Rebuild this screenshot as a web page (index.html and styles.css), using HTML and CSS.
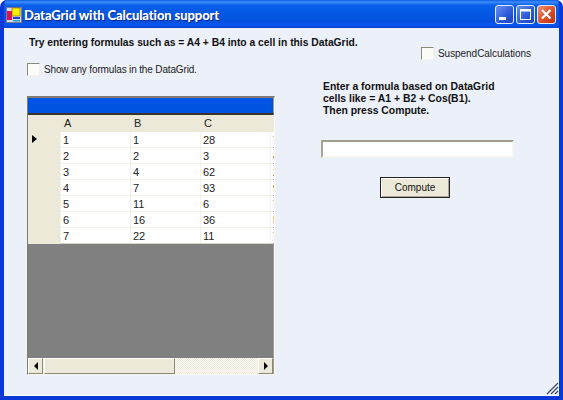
FILE: index.html
```html
<!DOCTYPE html>
<html lang="en">
<head>
<meta charset="utf-8">
<title>DataGrid with Calculation support</title>
<link rel="stylesheet" href="styles.css">
</head>
<body>
<div class="window">
  <header class="titlebar">
    <svg class="app-icon" width="16" height="16" viewBox="0 0 16 16">
      <rect x="0.5" y="0.5" width="15" height="15" fill="#d8d8e8" stroke="#7a7a90"/>
      <rect x="1" y="4" width="5" height="9" fill="#e0105a"/>
      <rect x="6" y="1" width="8" height="8" fill="#f8f000" stroke="#806000" stroke-width="0.6"/>
      <rect x="7" y="10" width="7" height="2" fill="#2040d0"/>
      <rect x="7" y="13" width="7" height="1.5" fill="#20a0c0"/>
    </svg>
    <span class="title">DataGrid with Calculation support</span>
    <div class="caption-buttons">
      <button class="cap cap-min" aria-label="Minimize"><svg width="19" height="19" viewBox="0 0 19 19"><rect x="4" y="12" width="7" height="3" fill="#fff"/></svg></button>
      <button class="cap cap-max" aria-label="Maximize"><svg width="19" height="19" viewBox="0 0 19 19"><rect x="4.5" y="4.5" width="10" height="10" fill="none" stroke="#fff"/><rect x="4" y="4" width="11" height="2.5" fill="#fff"/></svg></button>
      <button class="cap cap-close" aria-label="Close"><svg width="19" height="19" viewBox="0 0 19 19"><path d="M5 5l8.500 8.500M13.500 5L5 13.500" stroke="#fff" stroke-width="2.200" fill="none"/></svg></button>
    </div>
  </header>
  <main class="client">
    <section class="left">
      <p class="intro">Try entering formulas such as = A4 + B4 into a cell in this DataGrid.</p>
      <label class="check check-show"><span class="box"></span>Show any formulas in the DataGrid.</label>
      <div class="grid">
        <div class="grid-caption"></div>
        <div class="grid-view">
          <div class="row head"><div class="rh"></div><div class="c">A</div><div class="c cb">B</div><div class="c cc">C</div><div class="c cd"></div></div>
          <div class="row"><div class="rh"><span class="arrow"></span></div><div class="c">1</div><div class="c cb">1</div><div class="c cc">28</div><div class="c cd">7</div></div>
          <div class="row"><div class="rh"></div><div class="c">2</div><div class="c cb">2</div><div class="c cc">3</div><div class="c cd">4</div></div>
          <div class="row"><div class="rh"></div><div class="c">3</div><div class="c cb">4</div><div class="c cc">62</div><div class="c cd">2</div></div>
          <div class="row"><div class="rh"></div><div class="c">4</div><div class="c cb">7</div><div class="c cc">93</div><div class="c cd">9</div></div>
          <div class="row"><div class="rh"></div><div class="c">5</div><div class="c cb">11</div><div class="c cc">6</div><div class="c cd">7</div></div>
          <div class="row"><div class="rh"></div><div class="c">6</div><div class="c cb">16</div><div class="c cc">36</div><div class="c cd">5</div></div>
          <div class="row"><div class="rh"></div><div class="c">7</div><div class="c cb">22</div><div class="c cc">11</div><div class="c cd">7</div></div>
          <div class="grid-empty"></div>
          <div class="scrollbar">
            <div class="sb-btn"><span class="tri tri-left"></span></div>
            <div class="sb-thumb"></div>
            <div class="sb-track"></div>
            <div class="sb-btn"><span class="tri tri-right"></span></div>
          </div>
        </div>
      </div>
    </section>
    <section class="right">
      <label class="check check-suspend"><span class="box"></span>SuspendCalculations</label>
      <p class="hint">Enter a formula based on DataGrid<br>cells like = A1 + B2 + Cos(B1).<br>Then press Compute.</p>
      <input class="formula" type="text" aria-label="Formula">
      <button class="compute">Compute</button>
    </section>
    <svg class="grip" width="13" height="13" viewBox="0 0 13 13">
      <path d="M12 1L1 12M12 5L5 12M12 9L9 12" stroke="#3a4a70" stroke-width="1.300" fill="none"/>
      <path d="M12.500 2.500L2.500 12.500M12.500 6.500L6.500 12.500M12.500 10.500L10.500 12.500" stroke="#fff" stroke-width="0.800" fill="none"/>
    </svg>
  </main>
</div>
</body>
</html>
```
FILE: styles.css
```css
* { box-sizing: border-box; }
html, body { margin: 0; padding: 0; }
body {
  width: 563px;
  height: 400px;
  overflow: hidden;
  font-family: "Liberation Sans", Arial, sans-serif;
  font-size: 11px;
  color: #111;
  background: #fff;
}
.window {
  width: 563px;
  height: 400px;
  display: flex;
  flex-direction: column;
  border-radius: 7px 7px 0 0;
  overflow: hidden;
  background: #0a3fdc;
  border-left: 4px solid #0838d8;
  border-right: 4px solid #0838d8;
  border-bottom: 4px solid #0838d8;
}
.titlebar {
  flex: none;
  height: 28px;
  margin: 0 -4px;
  padding: 0 7px 0 6px;
  display: flex;
  align-items: center;
  gap: 2px;
  background: linear-gradient(#0a5ce0 0, #3c8cf8 2px, #0a60ea 5px, #0458e4 14px, #0550e0 22px, #0a58ee 25px, #0640d0 28px);
}
.app-icon { flex: none; margin-top: 1px; }
.title {
  font-family: "Lato", sans-serif;
  font-weight: 900;
  font-size: 13px;
  letter-spacing: -0.100px;
  color: #fff;
  text-shadow: 1px 1px 0 #0a2a90;
  margin-top: 1px;
}
.caption-buttons {
  margin-left: auto;
  display: flex;
  gap: 2px;
  margin-top: 1px;
}
.cap {
  width: 19px;
  height: 19px;
  padding: 0;
  border: 1px solid #e4ecff;
  border-radius: 3px;
  background: linear-gradient(135deg, #6a90f0, #2a58d8 60%, #1a40c0);
  display: flex;
}
.cap svg { margin: -1px; flex: none; }
.cap-close { background: linear-gradient(135deg, #f09070, #d84a20 60%, #b83010); }
.client {
  flex: 1;
  position: relative;
  display: flex;
  background: #ecf0f9;
  border-bottom: 1px solid #fff;
}
.left { width: 317px; flex: none; padding: 8px 0 0 23px; }
.intro {
  margin: 0 0 0 2px;
  height: 13px;
  line-height: 13px;
  font-size: 10.300px;
  font-weight: 700;
  white-space: nowrap;
}
.check {
  display: flex;
  align-items: center;
  gap: 4px;
  height: 13px;
  line-height: 13px;
  font-size: 10px;
  color: #222;
  white-space: nowrap;
}
.box {
  flex: none;
  width: 13px;
  height: 13px;
  background: #fbfbf7;
  border: 1px solid #8a8a78;
  border-right-color: #f4f3ea;
  border-bottom-color: #f4f3ea;
}
.check-show { margin-top: 14px; letter-spacing: -0.150px; }
.check-suspend { letter-spacing: -0.050px; }
.grid {
  margin-top: 20px;
  width: 248px;
  height: 279px;
  border: 1px solid #807c70;
  border-top-width: 2px;
  border-right-color: #f8f8f0;
  border-bottom-color: #f8f8f0;
  display: flex;
  flex-direction: column;
  background: #808080;
  overflow: hidden;
}
.grid-caption { flex: none; height: 15px; background: #0054e3; border-right: 1px solid #a09c90; }
.grid-view {
  flex: 1;
  display: flex;
  flex-direction: column;
  border-top: 2px solid #3a3428;
  border-right: 1px solid #a09c90;
  min-height: 0;
}
.row {
  flex: none;
  display: flex;
  height: 16px;
  background: #f4f2e8;
  gap: 1px;
}
.head { height: 17px; background: #ece9d8; }
.head .c { background: #ece9d8; padding-left: 3px; height: 17px; line-height: 17px; }
.rh {
  flex: none;
  width: 32px;
  background: #ece9d8;
  position: relative;
}
.c {
  flex: none;
  width: 69px;
  height: 15px;
  line-height: 16px;
  padding-left: 2px;
  background: #fff;
  overflow: hidden;
  color: #222;
  font-size: 11px;
}
.cd { width: 10px; }
.arrow {
  position: absolute;
  left: 4px;
  top: 3px;
  width: 0;
  height: 0;
  border-left: 5px solid #000;
  border-top: 4px solid transparent;
  border-bottom: 4px solid transparent;
}
.grid-empty { flex: 1; background: #808080; border-top: 1px solid #d8d5c4; margin-top: -1px; }
.scrollbar {
  flex: none;
  height: 16px;
  display: flex;
  background: repeating-conic-gradient(#fcfcf8 0 25%, #ece9d8 0 50%) 0 0 / 2px 2px;
}
.sb-btn {
  flex: none;
  width: 15px;
  background: #ece9d8;
  border: 1px solid;
  border-color: #fff #8a8678 #8a8678 #fff;
  display: flex;
  align-items: center;
  justify-content: center;
}
.sb-thumb {
  flex: none;
  width: 131px;
  margin-left: 1px;
  background: #ece9d8;
  border: 1px solid;
  border-color: #fff #8a8678 #8a8678 #fff;
}
.sb-track { flex: 1; }
.tri { width: 0; height: 0; border-top: 4px solid transparent; border-bottom: 4px solid transparent; }
.tri-left { border-right: 4px solid #000; }
.tri-right { border-left: 4px solid #000; }
.right { flex: 1; padding: 19px 0 0 0; display: flex; flex-direction: column; align-items: flex-start; }
.check-suspend { margin-left: 100px; }
.hint {
  margin: 21px 0 0 2px;
  font-size: 10.400px;
  font-weight: 700;
  line-height: 12px;
  white-space: nowrap;
}
.formula {
  margin-top: 23px;
  width: 193px;
  height: 18px;
  padding: 0 2px;
  background: #fff;
  border: 2px solid;
  border-color: #a09d8c #f6f6f0 #f6f6f0 #a8a594;
  outline: none;
}
.compute {
  margin: 19px 0 0 59px;
  width: 70px;
  height: 21px;
  padding: 0;
  background: #ece9d8;
  border: 1px solid #222;
  box-shadow: inset 1px 1px 0 #fff, inset -1px -1px 0 #aca899;
  font-family: "Liberation Sans", Arial, sans-serif;
  font-size: 10px;
  color: #111;
}
.grip { position: absolute; right: 0; bottom: 0; }
```
